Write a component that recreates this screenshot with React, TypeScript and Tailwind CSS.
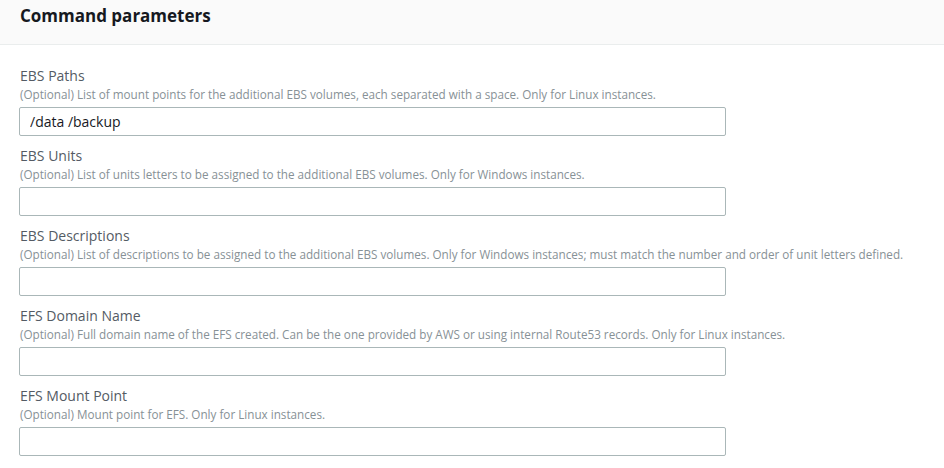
const fields = [
  {
    label: 'EBS Paths',
    description:
      '(Optional) List of mount points for the additional EBS volumes, each separated with a space. Only for Linux instances.',
    value: '/data /backup',
  },
  {
    label: 'EBS Units',
    description: '(Optional) List of units letters to be assigned to the additional EBS volumes. Only for Windows instances.',
    value: '',
  },
  {
    label: 'EBS Descriptions',
    description:
      '(Optional) List of descriptions to be assigned to the additional EBS volumes. Only for Windows instances; must match the number and order of unit letters defined.',
    value: '',
  },
  {
    label: 'EFS Domain Name',
    description:
      '(Optional) Full domain name of the EFS created. Can be the one provided by AWS or using internal Route53 records. Only for Linux instances.',
    value: '',
  },
  {
    label: 'EFS Mount Point',
    description: '(Optional) Mount point for EFS. Only for Linux instances.',
    value: '',
  },
];

export default function App() {
  return (
    <div className="w-[944px] h-[468px] overflow-hidden bg-white font-['Open_Sans',sans-serif]">
      {/* Header */}
      <div className="h-[45px] bg-[#fafafa] border-b border-[#eaeded] px-5 pt-[5px]">
        <h2 className="text-[17px] leading-[22px] font-bold text-[#16191f]">Command parameters</h2>
      </div>

      {/* Fields */}
      <div className="px-5 pt-[21px]">
        {fields.map((f) => (
          <div key={f.label} className="mb-[10px]">
            <div className="text-[14px] leading-[20px] text-[#545b64]">{f.label}</div>
            <div className="text-[11.7px] leading-[16px] text-[#879196] whitespace-nowrap">{f.description}</div>
            <input
              readOnly
              value={f.value}
              className="mt-[5px] -ml-px block w-[707px] h-[29px] rounded-[2px] border border-[#aab7b8] px-[10px] text-[14px] text-[#16191f] outline-none"
            />
          </div>
        ))}
      </div>
    </div>
  );
}
